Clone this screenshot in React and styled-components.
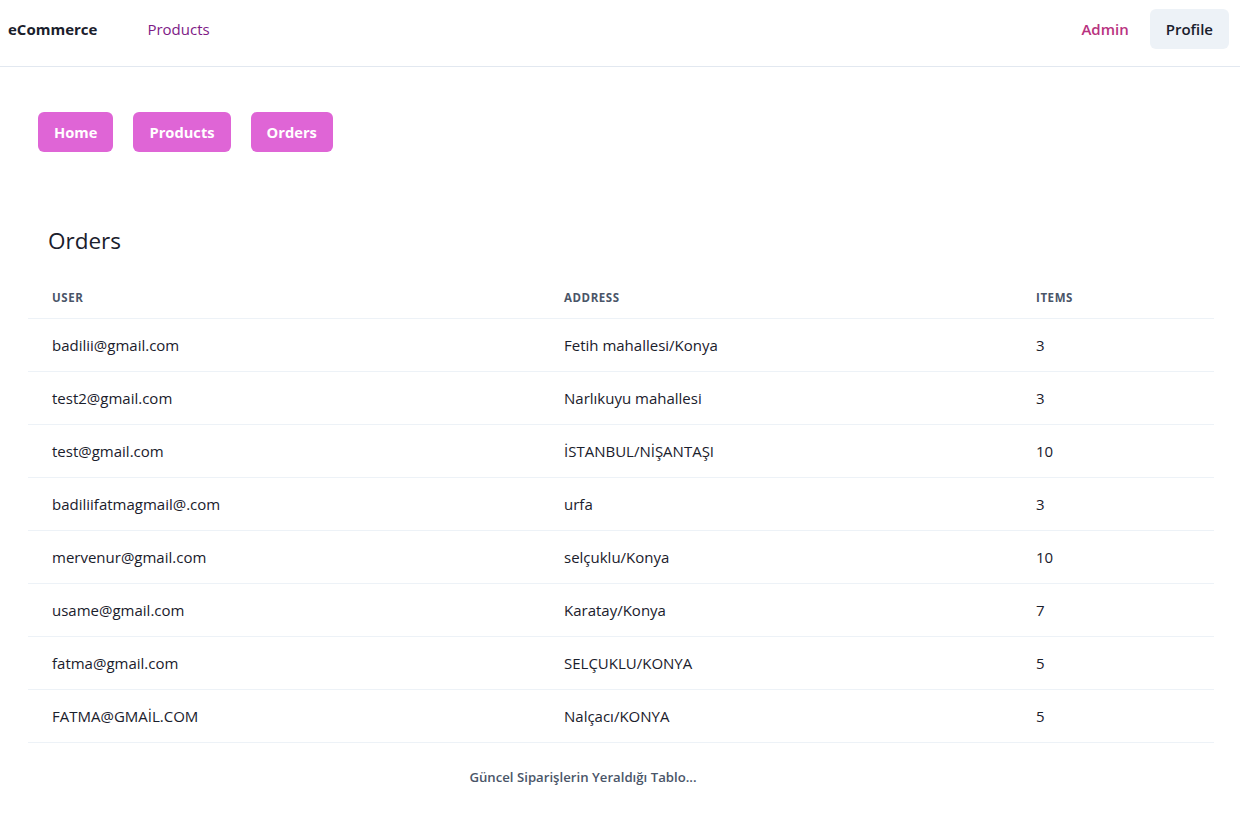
import React from "react";
import styled, { createGlobalStyle } from "styled-components";

const Global = createGlobalStyle`
  * { box-sizing: border-box; }
  html, body { margin: 0; padding: 0; background: #ffffff; }
  body {
    font-family: "Open Sans", "Noto Sans", sans-serif;
    color: #1a202c;
    -webkit-font-smoothing: antialiased;
  }
`;

const NavBar = styled.header`
  display: flex;
  align-items: center;
  justify-content: space-between;
  padding: 9px 11px 17px 8px;
  border-bottom: 1px solid #e2e8f0;
`;

const NavLeft = styled.nav`
  display: flex;
  align-items: center;
  gap: 50px;
`;

const Brand = styled.span`
  font-size: 15px;
  font-weight: 700;
  color: #1a202c;
`;

const NavLink = styled.a`
  font-size: 15px;
  color: ${(p) => p.$color || "#1a202c"};
  font-weight: ${(p) => p.$weight || 400};
  text-decoration: none;
  cursor: pointer;
`;

const NavRight = styled.div`
  display: flex;
  align-items: center;
  gap: 21px;
`;

const GrayButton = styled.button`
  height: 40px;
  padding: 0 16px;
  border: none;
  border-radius: 6px;
  background: #edf2f7;
  color: #1a202c;
  font-family: inherit;
  font-size: 15px;
  font-weight: 600;
  cursor: pointer;
`;

const ButtonRow = styled.div`
  display: flex;
  gap: 20px;
  padding: 45px 0 0 38px;
`;

const PinkButton = styled.button`
  height: 40px;
  padding: 0 16px;
  border: none;
  border-radius: 6px;
  background: #df65d6;
  color: #ffffff;
  font-family: inherit;
  font-size: 14.7px;
  font-weight: 700;
  cursor: pointer;
`;

const Section = styled.section`
  margin: 74px 26px 0 28px;
`;

const Title = styled.h2`
  margin: 0 0 23px 20px;
  font-size: 22.5px;
  font-weight: 400;
  line-height: 29px;
  color: #1a202c;
`;

const Table = styled.table`
  width: 100%;
  border-collapse: collapse;
  table-layout: fixed;
`;

const Th = styled.th`
  text-align: left;
  padding: 12px 24px;
  font-size: 11.5px;
  line-height: 16px;
  font-weight: 700;
  letter-spacing: 0.05em;
  text-transform: uppercase;
  color: #4a5568;
  border-bottom: 1px solid #edf2f7;
  width: ${(p) => p.$w}px;
`;

const Td = styled.td`
  padding: 16px 24px;
  font-size: 15px;
  line-height: 20px;
  color: #1a202c;
  border-bottom: 1px solid #edf2f7;
`;

const Caption = styled.caption`
  caption-side: bottom;
  margin-top: 16px;
  padding: 8px 100px 8px 24px;
  font-size: 13.2px;
  line-height: 20px;
  font-weight: 600;
  color: #4a5568;
  text-align: center;
`;

const orders = [
  ["badilii@gmail.com", "Fetih mahallesi/Konya", 3],
  ["test2@gmail.com", "Narlıkuyu mahallesi", 3],
  ["test@gmail.com", "İSTANBUL/NİŞANTAŞI", 10],
  ["badiliifatmagmail@.com", "urfa", 3],
  ["mervenur@gmail.com", "selçuklu/Konya", 10],
  ["usame@gmail.com", "Karatay/Konya", 7],
  ["fatma@gmail.com", "SELÇUKLU/KONYA", 5],
  ["FATMA@GMAİL.COM", "Nalçacı/KONYA", 5],
];

export default function App() {
  return (
    <>
      <Global />
      <NavBar>
        <NavLeft>
          <Brand>eCommerce</Brand>
          <NavLink $color="#7e1a86">Products</NavLink>
        </NavLeft>
        <NavRight>
          <NavLink $color="#b83280" $weight={600}>Admin</NavLink>
          <GrayButton>Profile</GrayButton>
        </NavRight>
      </NavBar>
      <ButtonRow>
        <PinkButton>Home</PinkButton>
        <PinkButton>Products</PinkButton>
        <PinkButton>Orders</PinkButton>
      </ButtonRow>
      <Section>
        <Title>Orders</Title>
        <Table>
          <Caption>Güncel Siparişlerin Yeraldığı Tablo...</Caption>
          <thead>
            <tr>
              <Th $w={512}>User</Th>
              <Th $w={472}>Address</Th>
              <Th $w={202}>Items</Th>
            </tr>
          </thead>
          <tbody>
            {orders.map(([user, address, items], i) => (
              <tr key={i}>
                <Td>{user}</Td>
                <Td>{address}</Td>
                <Td>{items}</Td>
              </tr>
            ))}
          </tbody>
        </Table>
      </Section>
    </>
  );
}
